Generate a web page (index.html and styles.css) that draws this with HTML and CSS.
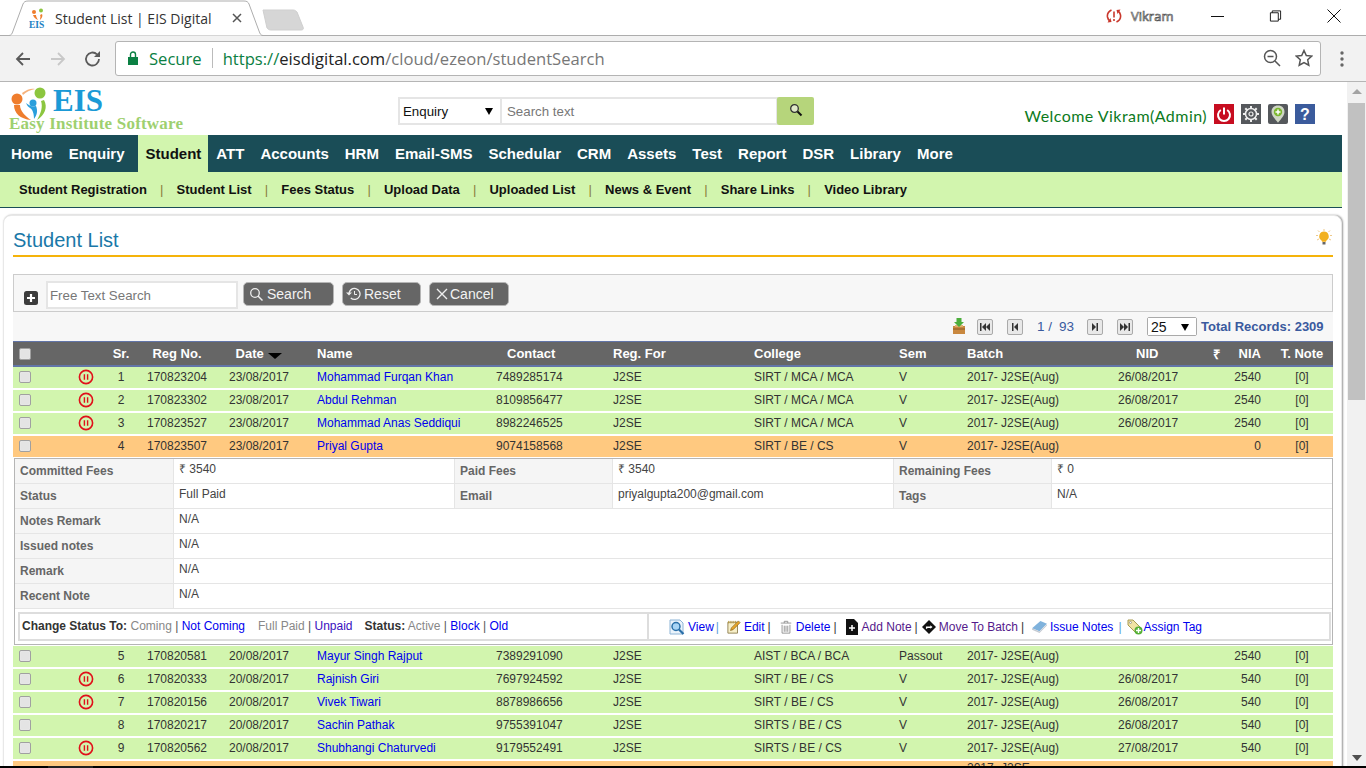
FILE: index.html
```html
<!DOCTYPE html>
<html lang="en">
<head>
<meta charset="utf-8">
<title>Student List | EIS Digital</title>
<link rel="stylesheet" href="styles.css">
</head>
<body>
<svg class="defs" aria-hidden="true">
  <symbol id="pause" viewBox="0 0 16 16"><circle cx="8" cy="8" r="6.600" fill="none" stroke="#e0101a" stroke-width="1.600"/><path d="M6.400 5.200v5.600M9.600 5.200v5.600" stroke="#e0101a" stroke-width="1.400"/></symbol>
</svg>
<div class="chrome">
  <div class="tabstrip">
    <div class="tab">
      <svg class="tabshape" viewBox="0 0 256 36"><path d="M0 35.500H1C3 35.500 4 34 5 31L15 4C16 2 17 1 20 1H236C239 1 240 2 241 4L251 31C252 34 253 35.500 255 35.500H256" fill="#fff" stroke="#adadad"/></svg>
      <svg class="favicon" viewBox="0 0 18 20"><circle cx="5" cy="4" r="2" fill="#ef7d2d"/><circle cx="12" cy="2.500" r="2" fill="#8cc63f"/><path d="M4 7c1 3 3 4 5 5-1-2-2-3-2-5zM13 6c1 2 0 4-2 6 0-2 1-4 0-5z" fill="#ef7d2d"/><text class="favtext" x="0" y="19.500">EIS</text></svg>
      <span class="tabtitle">Student List | EIS Digital</span>
      <svg class="tabclose" viewBox="0 0 10 10"><path d="M1 1l8 8M9 1l-8 8" stroke="#555" stroke-width="1.500"/></svg>
    </div>
    <svg class="newtab" viewBox="0 0 42 22"><path d="M1 1H31C33 1 34 2 35 3L41 18C42 20 41 21 39 21H9C7 21 6 20 5 19Z" fill="#d6d6d6" stroke="#cfcfcf"/></svg>
    <div class="winright">
      <svg class="sync" viewBox="0 0 16 16"><path d="M5.500 2C2.500 3.500 1 6 1.500 9c.3 1.500 1 2.800 2 3.700M10.500 14c3-1.500 4.500-4 4-7-.3-1.500-1-2.800-2-3.700" fill="none" stroke="#c9372c" stroke-width="1.600"/><path d="M1.500 14.500l4-.5-1-4zM14.500 1.500l-4 .5 1 4z" fill="#c9372c"/><path d="M8 3.500v6M8 11v2" stroke="#c9372c" stroke-width="1.600"/></svg>
      <span class="profile">Vikram</span>
      <svg class="winbtn winmin" viewBox="0 0 14 14"><path d="M0 7.500H13" stroke="#111"/></svg>
      <svg class="winbtn winmax" viewBox="0 0 14 14"><path d="M1.500 3.500h8.500v9H1.500zM3.500 3.500V1.500h9v9h-2.500" fill="none" stroke="#111"/></svg>
      <svg class="winbtn winclose" viewBox="0 0 14 14"><path d="M.5 .5l13 13M13.500 .5l-13 13" stroke="#111"/></svg>
    </div>
  </div>
  <div class="toolbar">
    <svg class="navicon" viewBox="0 0 18 18"><path d="M16 9H3M9 3L3 9l6 6" fill="none" stroke="#5a5a5a" stroke-width="1.800"/></svg>
    <svg class="navicon" viewBox="0 0 18 18"><path d="M2 9h13M9 3l6 6-6 6" fill="none" stroke="#c8c8c8" stroke-width="1.800"/></svg>
    <svg class="navicon" viewBox="0 0 18 18"><path d="M15 9a6.500 6.500 0 1 1-2-4.700" fill="none" stroke="#5a5a5a" stroke-width="1.800"/><path d="M16 1v6h-6z" fill="#5a5a5a"/></svg>
    <div class="omnibox">
      <svg class="lock" viewBox="0 0 10 14"><path d="M0 6h10v8H0z" fill="#0b8043"/><path d="M2.500 6V3.500a2.500 2.500 0 0 1 5 0V6" fill="none" stroke="#0b8043" stroke-width="1.400"/></svg>
      <span class="secure">Secure</span>
      <span class="urlsep"></span>
      <span class="url"><span class="scheme">https://</span><span class="host">eisdigital.com</span>/cloud/ezeon/studentSearch</span>
      <svg class="omniicon" viewBox="0 0 18 18"><circle cx="7.500" cy="7.500" r="6" fill="none" stroke="#555" stroke-width="1.500"/><path d="M4.500 7.500h6M12 12l5 5" stroke="#555" stroke-width="1.500"/></svg>
      <svg class="omniicon star" viewBox="0 0 18 18"><path d="M9 1.500l2.300 5 5.400.6-4 3.700 1.100 5.400L9 13.500l-4.800 2.700 1.100-5.400-4-3.700 5.400-.6z" fill="none" stroke="#555" stroke-width="1.500"/></svg>
    </div>
    <svg class="dots" viewBox="0 0 4 18"><circle cx="2" cy="3" r="1.700" fill="#666"/><circle cx="2" cy="9" r="1.700" fill="#666"/><circle cx="2" cy="15" r="1.700" fill="#666"/></svg>
  </div>
</div>
<div class="viewport">
  <div class="page">
    <header class="head">
      <svg class="logo" viewBox="0 -3 180 53">
        <circle cx="9" cy="14" r="5.500" fill="#ef7d2d"/>
        <path d="M6 20C6 28 12 34 23 35C17 31 12 26 12 20Z" fill="#ef7d2d"/>
        <path d="M14 8C19 4 24 3 27 4C22 5 18 7 15 10Z" fill="#f6b27c"/>
        <circle cx="32" cy="8" r="5.500" fill="#8cc63f"/>
        <path d="M36 15C40 22 37 30 29 35C33 28 35 22 33 16Z" fill="#8cc63f"/>
        <circle cx="25" cy="18" r="3.500" fill="#2a9fdc"/>
        <path d="M18 18C22 21 24 22 28 21C30 26 29 30 26 34C26 29 25 25 22 23C20 22 19 20 18 18Z" fill="#2a9fdc"/>
        <text class="logoeis" x="45" y="26">EIS</text>
        <text class="logotag" x="1" y="44" textLength="174">Easy Institute Software</text>
      </svg>
      <div class="topsearch">
        <div class="selwrap enq"><select class="sel"><option>Enquiry</option></select></div>
        <input class="topinput" type="text" placeholder="Search text">
        <button class="topbtn" type="button" aria-label="Search"><svg viewBox="0 0 14 14"><circle cx="5.500" cy="5.500" r="3.800" fill="#dfe9c8" stroke="#333" stroke-width="1.300"/><path d="M8.500 8.500l4 4" stroke="#111" stroke-width="2"/></svg></button>
      </div>
      <div class="welcome">Welcome Vikram(Admin)</div>
      <div class="topicons">
        <svg class="ticon" viewBox="0 0 20 20"><rect width="20" height="20" fill="#c70d20"/><path d="M6.800 6a6 6 0 1 0 6.400 0" fill="none" stroke="#fff" stroke-width="2"/><path d="M10 3.500v7" stroke="#fff" stroke-width="2"/></svg>
        <svg class="ticon" viewBox="0 0 20 20"><rect width="20" height="20" fill="#55585c"/><circle cx="10" cy="10" r="5.500" fill="none" stroke="#eee" stroke-width="1.500"/><circle cx="10" cy="10" r="2" fill="none" stroke="#eee" stroke-width="1.200"/><path d="M10 2v3M10 15v3M2 10h3M15 10h3M4.300 4.300l2.200 2.200M13.500 13.500l2.200 2.200M15.700 4.300l-2.200 2.200M6.500 13.500l-2.200 2.200" stroke="#eee" stroke-width="2"/></svg>
        <svg class="ticon" viewBox="0 0 20 20"><rect width="20" height="20" rx="2" fill="#55585c"/><path d="M10 1.500c4 0 6.500 2.700 6.500 6.200 0 4-3.500 7-6.500 11-3-4-6.500-7-6.500-11 0-3.500 2.500-6.200 6.500-6.200z" fill="#cfd6c4"/><circle cx="10" cy="8" r="4.200" fill="#7cb82f"/><path d="M10 5.500v5M7.500 8h5" stroke="#fff" stroke-width="1.500"/></svg>
        <svg class="ticon" viewBox="0 0 20 20"><rect width="20" height="20" fill="#3b5b9c"/><text class="qmark" x="10" y="15.500">?</text></svg>
      </div>
    </header>
    <nav class="mainnav">
      <a>Home</a><a>Enquiry</a><a class="active">Student</a><a>ATT</a><a>Accounts</a><a>HRM</a><a>Email-SMS</a><a>Schedular</a><a>CRM</a><a>Assets</a><a>Test</a><a>Report</a><a>DSR</a><a>Library</a><a>More</a>
    </nav>
    <nav class="subnav">
      <a>Student Registration</a><i>|</i><a>Student List</a><i>|</i><a>Fees Status</a><i>|</i><a>Upload Data</a><i>|</i><a>Uploaded List</a><i>|</i><a>News &amp; Event</a><i>|</i><a>Share Links</a><i>|</i><a>Video Library</a>
    </nav>
    <section class="card">
      <div class="cardtitle">
        <h1>Student List</h1>
        <svg class="bulb" viewBox="0 0 16 16"><path d="M8 2.500a4.800 4.800 0 0 0-3 8.500c.8.700 1 1.200 1 1.800h4c0-.6.200-1.100 1-1.800a4.800 4.800 0 0 0-3-8.500z" fill="#f2b01e"/><path d="M6.500 13h3v2.500h-3z" fill="#666"/><path d="M8 0v2M0 6.500h2M14 6.500h2M2 1.500L3.500 3M14 1.500L12.500 3M1 11l2-1M15 11l-2-1" stroke="#eec98a"/></svg>
      </div>
      <div class="filterbox">
        <svg class="plus" viewBox="0 0 14 14"><rect width="14" height="14" rx="2.500" fill="#3c3c3c"/><path d="M7 3v8M3 7h8" stroke="#fff" stroke-width="2.200"/></svg>
        <input class="freetext" type="text" placeholder="Free Text Search">
        <button class="btn bsearch" type="button"><svg viewBox="0 0 14 14"><circle cx="6" cy="6" r="4.300" fill="none" stroke="#eee" stroke-width="1.300"/><path d="M9 9l4.500 4.500" stroke="#eee" stroke-width="1.500"/></svg>Search</button>
        <button class="btn breset" type="button"><svg viewBox="0 0 16 14"><path d="M4 7a5.500 5.500 0 1 1 1.800 4" fill="none" stroke="#eee" stroke-width="1.300"/><path d="M1 5.500l3 3 3-3z" fill="#eee"/><path d="M9.500 4v3.500h2.500" fill="none" stroke="#eee"/></svg>Reset</button>
        <button class="btn bcancel" type="button"><svg viewBox="0 0 14 14"><path d="M2 2l10 10M12 2L2 12" stroke="#eee" stroke-width="1.400"/></svg>Cancel</button>
      </div>
      <div class="pager">
        <svg class="export" viewBox="0 0 14 17"><path d="M1 8h12v8H1z" fill="#c9883f"/><path d="M1 11h12" stroke="#8a5a24"/><path d="M3 7h8v2H3z" fill="#e0b070"/><path d="M4.500 0h5v4H12L7 9 2 4h2.500z" fill="#4cae3c"/></svg>
        <span class="pbtn first"><svg viewBox="0 0 10 8"><path d="M0 0h1.500v8H0zM6 0v8L2 4zM10 0v8L6 4z" fill="#333"/></svg></span>
        <span class="pbtn prev"><svg viewBox="0 0 10 8"><path d="M2 0h1.500v8H2zM8 0v8L4 4z" fill="#333"/></svg></span>
        <span class="pnum">1 /</span><span class="ptotal">93</span>
        <span class="pbtn next"><svg viewBox="0 0 10 8"><path d="M2 0v8l4-4zM6.500 0H8v8H6.500z" fill="#333"/></svg></span>
        <span class="pbtn last"><svg viewBox="0 0 10 8"><path d="M0 0v8l4-4zM4 0v8l4-4zM8.500 0H10v8H8.500z" fill="#333"/></svg></span>
        <div class="selwrap per"><select class="sel"><option>25</option></select></div>
        <span class="total">Total Records: 2309</span>
      </div>
      <table class="list">
        <colgroup>
          <col class="c1"><col class="c2"><col class="c3"><col class="c4"><col class="c5"><col class="c6"><col class="c7"><col class="c8"><col class="c9"><col class="c10"><col class="c11"><col class="c12"><col class="c13"><col class="c14"><col class="c15">
        </colgroup>
        <thead>
          <tr>
            <th class="ck"><input class="cb" type="checkbox"></th><th></th><th class="ctr">Sr.</th><th class="ctr">Reg No.</th><th class="ctr">Date <span class="sort"></span></th><th class="nm">Name</th><th class="hcontact">Contact</th><th class="lft">Reg. For</th><th class="lft">College</th><th class="lft">Sem</th><th class="lft">Batch</th><th class="hnid">NID</th><th class="hrs">₹</th><th class="rgt">NIA</th><th class="tn">T. Note</th>
          </tr>
        </thead>
        <tbody>
          <tr class="g"><td class="ck"><input class="cb" type="checkbox"></td><td class="ctr"><svg class="pz"><use href="#pause"/></svg></td><td class="ctr">1</td><td class="ctr">170823204</td><td class="ctr">23/08/2017</td><td class="nm"><a>Mohammad Furqan Khan</a></td><td class="lft">7489285174</td><td class="lft">J2SE</td><td class="lft">SIRT / MCA / MCA</td><td class="lft">V</td><td class="lft">2017- J2SE(Aug)</td><td class="lft">26/08/2017</td><td></td><td class="rgt">2540</td><td class="tn">[0]</td></tr>
          <tr class="g"><td class="ck"><input class="cb" type="checkbox"></td><td class="ctr"><svg class="pz"><use href="#pause"/></svg></td><td class="ctr">2</td><td class="ctr">170823302</td><td class="ctr">23/08/2017</td><td class="nm"><a>Abdul Rehman</a></td><td class="lft">8109856477</td><td class="lft">J2SE</td><td class="lft">SIRT / MCA / MCA</td><td class="lft">V</td><td class="lft">2017- J2SE(Aug)</td><td class="lft">26/08/2017</td><td></td><td class="rgt">2540</td><td class="tn">[0]</td></tr>
          <tr class="g"><td class="ck"><input class="cb" type="checkbox"></td><td class="ctr"><svg class="pz"><use href="#pause"/></svg></td><td class="ctr">3</td><td class="ctr">170823527</td><td class="ctr">23/08/2017</td><td class="nm"><a>Mohammad Anas Seddiqui</a></td><td class="lft">8982246525</td><td class="lft">J2SE</td><td class="lft">SIRT / MCA / MCA</td><td class="lft">V</td><td class="lft">2017- J2SE(Aug)</td><td class="lft">26/08/2017</td><td></td><td class="rgt">2540</td><td class="tn">[0]</td></tr>
          <tr class="o open"><td class="ck"><input class="cb" type="checkbox"></td><td></td><td class="ctr">4</td><td class="ctr">170823507</td><td class="ctr">23/08/2017</td><td class="nm"><a>Priyal Gupta</a></td><td class="lft">9074158568</td><td class="lft">J2SE</td><td class="lft">SIRT / BE / CS</td><td class="lft">V</td><td class="lft">2017- J2SE(Aug)</td><td></td><td></td><td class="rgt">0</td><td class="tn">[0]</td></tr>
          <tr class="detailrow">
            <td colspan="15">
              <div class="detail">
                <table class="info">
                  <colgroup><col class="il1"><col class="iv"><col class="il"><col class="iv"><col class="il"><col class="iv2"></colgroup>
                  <tr><th>Committed Fees</th><td>₹ 3540</td><th>Paid Fees</th><td>₹ 3540</td><th>Remaining Fees</th><td>₹ 0</td></tr>
                  <tr><th>Status</th><td>Full Paid</td><th>Email</th><td>priyalgupta200@gmail.com</td><th>Tags</th><td>N/A</td></tr>
                  <tr><th>Notes Remark</th><td colspan="5">N/A</td></tr>
                  <tr><th>Issued notes</th><td colspan="5">N/A</td></tr>
                  <tr><th>Remark</th><td colspan="5">N/A</td></tr>
                  <tr><th>Recent Note</th><td colspan="5">N/A</td></tr>
                </table>
                <div class="actions">
                  <div class="status">
                    <b>Change Status To:</b> <span class="mut">Coming</span> | <a class="blue">Not Coming</a><span class="mut sp1">Full Paid</span> | <a class="vio">Unpaid</a><b class="sp2">Status:</b> <span class="mut">Active</span> | <a class="blue">Block</a> | <a class="blue">Old</a>
                  </div>
                  <div class="ops">
                    <svg class="op" viewBox="0 0 16 16"><path d="M1 1h10l3 3v11H1z" fill="#eaf3fb" stroke="#8db4d6"/><circle cx="7" cy="7.500" r="4" fill="#a8d4f5" stroke="#2a6fa8" stroke-width="1.500"/><path d="M10 10.500l4.500 4.500" stroke="#2a6fa8" stroke-width="2.200"/></svg>
                    <a class="blue">View</a><i class="bar">|</i>
                    <svg class="op e" viewBox="0 0 16 16"><path d="M1 2.500h11V15H1z" fill="#f7efc9" stroke="#8a7a4a"/><path d="M2 1v3M4.500 1v3M7 1v3M9.500 1v3" stroke="#b8942e"/><path d="M4 12l1-3 8-8 2 2-8 8z" fill="#e8a52a" stroke="#7a5a18" stroke-width=".7"/></svg>
                    <a class="blue">Edit</a><i class="bar dark">|</i>
                    <svg class="op e" viewBox="0 0 16 16"><path d="M2 3.500h12M6 3.500V1.500h4v2M3.500 5.500v9.500h9V5.500M6 6.500v7M8 6.500v7M10 6.500v7" fill="none" stroke="#8c8c8c"/></svg>
                    <a class="blue">Delete</a><i class="bar dark">|</i>
                    <svg class="op e" viewBox="0 0 14 16"><path d="M1 0h8l4 4v12H1z" fill="#111"/><path d="M7 6v6M4 9h6" stroke="#fff" stroke-width="1.500"/></svg>
                    <a class="vis">Add Note</a><i class="bar dark b2">|</i>
                    <svg class="op d" viewBox="0 0 16 16"><path d="M8 0l8 8-8 8-8-8z" fill="#111"/><path d="M4.500 10V7.500h5V6l2.500 2-2.500 2V9H6v1z" fill="#fff"/></svg>
                    <a class="vis">Move To Batch</a><i class="bar dark b3">|</i>
                    <svg class="op b" viewBox="0 0 16 14"><path d="M0 9L9 1l7 3-8 8z" fill="#7fb2dc"/><path d="M0 9l8 3.500 8-8v1.500l-8 8L0 10.500z" fill="#c3c9d1"/></svg>
                    <a class="blue">Issue Notes</a><i class="bar b4">|</i>
                    <svg class="op t" viewBox="0 0 16 16"><path d="M1 1h5l8 8-5 5-8-8z" fill="#f1e3a4" stroke="#a89a50"/><circle cx="3.500" cy="3.500" r="1" fill="#fff" stroke="#777" stroke-width=".6"/><circle cx="11.500" cy="11.500" r="4" fill="#55b035"/><path d="M11.500 9v5M9 11.500h5" stroke="#fff" stroke-width="1.400"/></svg>
                    <a class="blue">Assign Tag</a>
                  </div>
                </div>
              </div>
            </td>
          </tr>
          <tr class="g"><td class="ck"><input class="cb" type="checkbox"></td><td></td><td class="ctr">5</td><td class="ctr">170820581</td><td class="ctr">20/08/2017</td><td class="nm"><a>Mayur Singh Rajput</a></td><td class="lft">7389291090</td><td class="lft">J2SE</td><td class="lft">AIST / BCA / BCA</td><td class="lft">Passout</td><td class="lft">2017- J2SE(Aug)</td><td></td><td></td><td class="rgt">2540</td><td class="tn">[0]</td></tr>
          <tr class="g"><td class="ck"><input class="cb" type="checkbox"></td><td class="ctr"><svg class="pz"><use href="#pause"/></svg></td><td class="ctr">6</td><td class="ctr">170820333</td><td class="ctr">20/08/2017</td><td class="nm"><a>Rajnish Giri</a></td><td class="lft">7697924592</td><td class="lft">J2SE</td><td class="lft">SIRT / BE / CS</td><td class="lft">V</td><td class="lft">2017- J2SE(Aug)</td><td class="lft">26/08/2017</td><td></td><td class="rgt">540</td><td class="tn">[0]</td></tr>
          <tr class="g"><td class="ck"><input class="cb" type="checkbox"></td><td class="ctr"><svg class="pz"><use href="#pause"/></svg></td><td class="ctr">7</td><td class="ctr">170820156</td><td class="ctr">20/08/2017</td><td class="nm"><a>Vivek Tiwari</a></td><td class="lft">8878986656</td><td class="lft">J2SE</td><td class="lft">SIRT / BE / CS</td><td class="lft">V</td><td class="lft">2017- J2SE(Aug)</td><td class="lft">26/08/2017</td><td></td><td class="rgt">540</td><td class="tn">[0]</td></tr>
          <tr class="g"><td class="ck"><input class="cb" type="checkbox"></td><td></td><td class="ctr">8</td><td class="ctr">170820217</td><td class="ctr">20/08/2017</td><td class="nm"><a>Sachin Pathak</a></td><td class="lft">9755391047</td><td class="lft">J2SE</td><td class="lft">SIRTS / BE / CS</td><td class="lft">V</td><td class="lft">2017- J2SE(Aug)</td><td class="lft">26/08/2017</td><td></td><td class="rgt">540</td><td class="tn">[0]</td></tr>
          <tr class="g"><td class="ck"><input class="cb" type="checkbox"></td><td class="ctr"><svg class="pz"><use href="#pause"/></svg></td><td class="ctr">9</td><td class="ctr">170820562</td><td class="ctr">20/08/2017</td><td class="nm"><a>Shubhangi Chaturvedi</a></td><td class="lft">9179552491</td><td class="lft">J2SE</td><td class="lft">SIRTS / BE / CS</td><td class="lft">V</td><td class="lft">2017- J2SE(Aug)</td><td class="lft">27/08/2017</td><td></td><td class="rgt">540</td><td class="tn">[0]</td></tr>
          <tr class="o cut"><td colspan="10"></td><td class="lft">2017- J2SE</td><td colspan="4"></td></tr>
        </tbody>
      </table>
    </section>
  </div>
  <div class="scrollbar">
    <span class="arrow up"></span>
    <span class="thumb"></span>
    <span class="arrow down"></span>
  </div>
</div>
<div class="strip"></div>
</body>
</html>
```

FILE: styles.css
```css
* { box-sizing: border-box; }
html, body { margin: 0; height: 100%; }
body {
  width: 1366px; height: 768px; overflow: hidden; display: flex; flex-direction: column;
  font-family: "Liberation Sans", Arial, sans-serif; font-size: 12px; color: #333; background: #fff;
}
.defs { display: none; }
a { text-decoration: none; }
i { font-style: normal; }

/* browser chrome */
.chrome { flex: none; }
.tabstrip { height: 36px; display: flex; align-items: flex-start; padding-left: 8px; background: #fff; border-bottom: 1px solid #adadad; }
.tab { position: relative; width: 256px; height: 36px; display: flex; align-items: center; flex: none; }
.tabshape { position: absolute; inset: 0; width: 256px; height: 36px; }
.favicon { position: relative; width: 18px; height: 20px; margin-left: 21px; flex: none; }
.favtext { font: bold 9.500px "Liberation Serif", serif; fill: #1b7fc4; }
.tabtitle { position: relative; margin-left: 8px; font: 14px "Open Sans", "Noto Sans", sans-serif; color: #333; white-space: nowrap; width: 177px; }
.tabclose { position: relative; width: 10px; height: 10px; flex: none; }
.newtab { width: 42px; height: 22px; margin: 9px 0 0 -2px; flex: none; }
.winright { margin-left: auto; display: flex; align-items: center; height: 32px; }
.sync { width: 16px; height: 16px; margin-right: 9px; }
.profile { font: 13px "Open Sans", sans-serif; color: #fff; -webkit-text-stroke: .7px #555; margin-right: 35px; width: 45px; }
.winbtn { width: 14px; height: 14px; flex: none; }
.winmin { margin-right: 44px; }
.winmax { margin-right: 45px; width: 13px; }
.winclose { margin-right: 25px; }
.toolbar { height: 46px; background: #f2f2f2; border-bottom: 1px solid #b5b5b5; display: flex; align-items: center; padding-left: 14px; }
.navicon { width: 18px; height: 18px; margin-right: 17px; flex: none; }
.navicon:nth-child(3) { margin-right: 13px; }
.omnibox { width: 1206px; height: 35px; background: #fff; border: 1px solid #b4b4b4; border-radius: 3px; display: flex; align-items: center; padding-left: 12px; margin-top: -1px; }
.lock { width: 10px; height: 14px; flex: none; }
.secure { margin-left: 11px; font: 16.600px "Open Sans", sans-serif; color: #0b8043; }
.urlsep { width: 1px; height: 20px; background: #bbb; margin: 0 10px; }
.url { font: 16.600px "Open Sans", sans-serif; color: #777; white-space: nowrap; flex: 1; }
.scheme { color: #0b8043; }
.host { color: #222; }
.omniicon { width: 18px; height: 18px; margin-right: 14px; flex: none; }
.star { margin-right: 7px; }
.dots { width: 4px; height: 18px; margin-left: 19px; }

/* page frame */
.viewport { flex: 1; min-height: 0; display: flex; overflow: hidden; }
.page { width: 1347px; flex: none; padding-right: 5px; }
.scrollbar { flex: 1; background: #f1f1f1; padding: 7px 1px 0; display: flex; flex-direction: column; align-items: center; }
.arrow { width: 0; height: 0; border-left: 5px solid transparent; border-right: 5px solid transparent; }
.arrow.up { border-bottom: 5px solid #a3a3a3; margin-bottom: 9px; }
.thumb { width: 17px; height: 297px; background: #c1c1c1; }
.arrow.down { border-top: 6px solid #505050; margin-top: auto; margin-bottom: 5px; }
.strip { height: 2px; flex: none; background: linear-gradient(90deg, #000 48px, #222 48px, #222 93px, #000 93px); }

/* site header */
.head { height: 53px; display: flex; align-items: flex-start; padding: 0 27px 0 8px; }
.logo { width: 180px; height: 53px; flex: none; }
.logoeis { font: bold 31px "Liberation Serif", serif; fill: #1b9ad6; }
.logotag { font: bold 17px "Liberation Serif", serif; fill: #9ed06f; }
.topsearch { margin: 15px 0 0 210px; display: flex; flex: none; height: 28px; }
.selwrap { position: relative; }
.selwrap::after { content: ""; position: absolute; top: 50%; margin-top: -3px; right: 7px; border-left: 4px solid transparent; border-right: 4px solid transparent; border-top: 7px solid #000; pointer-events: none; }
.sel { appearance: none; border: 0; background: #fff; font: 13.300px "Liberation Sans", sans-serif; color: #111; width: 100%; height: 100%; border-radius: 0; padding: 0 0 0 3px; }
.enq { width: 104px; border: 2px solid #e5e5e5; }
.topinput { width: 276px; border: 2px solid #e5e5e5; border-left: 0; padding: 0 5px; font: 13.300px "Liberation Sans", sans-serif; height: 28px; }
.topinput::placeholder { color: #777; }
.topbtn { width: 37px; height: 28px; margin-left: -1px; padding: 0; border: 0; border-radius: 2px; background: #b6d57b; display: flex; justify-content: center; padding-top: 6px; }
.topbtn svg { width: 14px; height: 14px; }
.welcome { margin: 24px 0 0 auto; font: 16px "Lato", "Noto Sans", sans-serif; letter-spacing: .45px; color: #0c7a1c; white-space: nowrap; }
.topicons { display: flex; gap: 7px; margin: 22px 0 0 7px; }
.ticon { width: 20px; height: 20px; display: block; }
.qmark { font: bold 16px "Liberation Sans", sans-serif; fill: #fff; text-anchor: middle; }

.mainnav { height: 37px; background: #1a4d57; display: flex; padding-left: 3px; }
.mainnav a { padding: 0 8px; font-size: 15px; font-weight: bold; line-height: 37px; color: #fff; white-space: nowrap; }
.mainnav a.active { background: #d2f5ae; color: #111; margin-left: 5px; padding-right: 7px; }
.subnav { height: 36px; background: #d2f5ae; border-bottom: 1px solid #1a4d57; display: flex; gap: 13.150px; padding-left: 19px; line-height: 35px; font-size: 13px; white-space: nowrap; }
.subnav a { font-weight: bold; color: #111; }
.subnav i { color: #8a7d3a; }

/* card */
.card { margin: 7px 0 0 3px; padding: 0 8px 0 9px; border: 1px solid #e8e8e8; border-radius: 8px 8px 0 0; box-shadow: 1px 0 2px #999; background: #fff; }
.cardtitle { height: 39px; border-bottom: 2px solid #f5b30a; display: flex; justify-content: space-between; align-items: flex-start; box-sizing: content-box; }
.cardtitle h1 { margin: 12px 0 0; font-size: 20px; font-weight: normal; line-height: 24px; color: #1a78a8; }
.bulb { width: 16px; height: 16px; margin: 13px 1px 0 0; }
.filterbox { margin-top: 17px; height: 38px; background: #f7f7f7; border: 1px solid #ccc; display: flex; align-items: flex-start; padding: 6px 0 0 10px; }
.plus { width: 14px; height: 14px; margin-top: 10px; flex: none; }
.freetext { width: 192px; height: 28px; margin-left: 8px; border: 2px solid #e5e5e5; padding: 0 2px; font: 13.300px "Liberation Sans", sans-serif; background: #fff; }
.freetext::placeholder { color: #777; }
.btn { height: 24px; margin-top: 1px; border: 1px solid #b5b5b5; border-radius: 5px; background: #666; color: #f2f2f2; font: 14px "Liberation Sans", sans-serif; padding: 0 0 0 5px; display: flex; align-items: center; gap: 3px; }
.btn svg { width: 14px; height: 14px; flex: none; }
.bsearch { width: 91px; margin-left: 5px; gap: 4px; }
.breset { width: 79px; margin-left: 8px; padding-left: 2px; }
.btn.breset svg { width: 16px; }
.bcancel { width: 80px; margin-left: 8px; gap: 1px; }
.pager { height: 29px; background: #f7f7f7; display: flex; align-items: center; }
.export { width: 14px; height: 17px; margin-left: 939px; flex: none; }
.pbtn { width: 16px; height: 16px; border: 1px solid #aaa; border-radius: 2px; background: #e8e8e8; display: flex; align-items: center; justify-content: center; flex: none; }
.pbtn svg { width: 10px; height: 8px; }
.first { margin-left: 11px; }
.prev { margin-left: 14px; }
.pnum { margin-left: 14px; width: 22px; font-size: 13.500px; color: #3a5a9e; }
.ptotal { font-size: 13.500px; color: #3a5a9e; width: 28px; }
.last { margin-left: 14px; }
.per { width: 50px; height: 19px; margin-left: 14px; border: 1px solid #aaa; border-radius: 2px; background: #fff; }
.per .sel { font-size: 14px; }
.total { margin-left: 4px; font-size: 13px; font-weight: bold; color: #3a5a9e; white-space: nowrap; }

/* table */
.list { width: 1320px; table-layout: fixed; border-collapse: separate; border-spacing: 0; }
.c1 { width: 57px; } .c2 { width: 32px; } .c3 { width: 38px; } .c4 { width: 74px; } .c5 { width: 90px; }
.c6 { width: 186px; } .c7 { width: 117px; } .c8 { width: 141px; } .c9 { width: 145px; } .c10 { width: 68px; }
.c11 { width: 151px; } .c12 { width: 85px; } .c13 { width: 33px; } .c14 { width: 41px; } .c15 { width: 62px; }
.list > thead th { height: 26px; padding: 0; background: #666; color: #fff; font-size: 13px; font-weight: bold; text-align: left; border-top: 1px solid #6275a8; border-bottom: 2px solid #6275a8; white-space: nowrap; }
.list > tbody > tr > td { height: 23px; padding: 0 0 1px; border-bottom: 2px solid #fff; white-space: nowrap; overflow: hidden; }
.list > tbody > tr.g > td { background: #d2f5ae; }
.list > tbody > tr.o > td { background: #ffc980; }
.list > tbody > tr.open > td { height: 22px; border-bottom-width: 1px; }
.list > tbody > tr.detailrow > td { height: 188px; padding: 0 0 1px 1px; vertical-align: top; background: #fff; border: 0; }
.list > tbody > tr.cut > td { height: 30px; vertical-align: top; line-height: 13px; padding-top: 1px; }
.list th.ck, .list td.ck { padding-left: 6px; }
.list .ctr { text-align: center; }
.list .lft { padding-left: 6px; }
.list .rgt { text-align: right; padding-right: 10px; }
.list .nm { padding-left: 13px; }
.list .nm a { color: #00e; }
.list .tn { text-align: center; }
.list th.hcontact { padding-left: 17px; }
.list th.hnid { padding-left: 24px; }
.list th.hrs { padding-left: 16px; }
.sort { display: inline-block; margin-left: 1px; border-left: 7px solid transparent; border-right: 7px solid transparent; border-top: 6px solid #000; vertical-align: -1px; }
.cb { appearance: none; display: block; width: 12px; height: 12px; margin: 0; background: #e4e4e4; border: 1px solid #a0a0a0; border-radius: 2px; box-shadow: inset 0 0 1px #fff; }
.pz { width: 16px; height: 16px; display: block; margin: 0 auto; }

/* expanded detail */
.detail { border: 1px solid #b5b5b5; height: 187px; }
.info { width: 100%; table-layout: fixed; border-collapse: separate; border-spacing: 0; }
.il1 { width: 159px; }
.il { width: 158px; }
.iv { width: 281px; }
.iv2 { width: 280px; }
.info th { height: 25px; padding: 0 0 0 5px; background: #f5f5f5; color: #666; font-size: 12px; font-weight: bold; text-align: left; vertical-align: middle; border-right: 1px solid #e5e5e5; border-bottom: 1px solid #e5e5e5; }
.info td { height: 25px; padding: 3px 0 0 5px; line-height: 14px; vertical-align: top; color: #444; border-bottom: 1px solid #e5e5e5; border-right: 1px solid #e5e5e5; }
.info td:last-child { border-right: 0; }
.actions { display: flex; margin: 3px 1px 0 3px; height: 29px; }
.status { width: 631px; height: 29px; border: 2px solid #ddd; padding-left: 2px; line-height: 25px; white-space: nowrap; color: #555; }
.status b { color: #333; }
.mut { color: #888; }
.blue { color: #00e; }
.vis { color: #551a8b; }
.vio { color: #3a10c0; }
.sp1 { margin-left: 13px; }
.sp2 { margin-left: 12px; }
.ops { flex: 1; height: 29px; border: 2px solid #ddd; border-left: 0; display: flex; align-items: center; padding-left: 20px; white-space: nowrap; }
.op { width: 16px; height: 16px; margin-right: 3px; flex: none; }
.op.e { width: 14px; }
.op.d { width: 14px; height: 14px; }
.op.b { width: 15px; height: 13px; }
.op.t { margin-right: 1px; }
.bar { margin: 0 8px 0 2px; color: #5aa0d8; }
.bar.dark { color: #333; margin: 0 8px 0 3px; }
.bar.dark.b2 { margin: 0 4px 0 3px; }
.bar.dark.b3 { margin: 0 8px 0 3px; }
.bar.b4 { margin: 0 5px 0 5px; }
```
